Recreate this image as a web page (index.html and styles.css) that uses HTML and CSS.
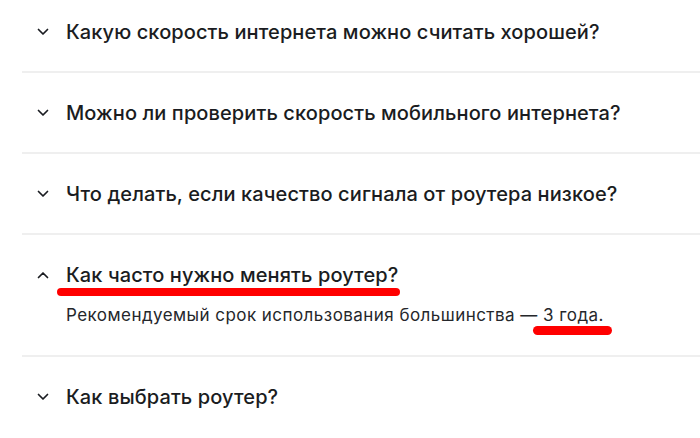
FILE: index.html
```html
<!DOCTYPE html>
<html lang="ru">
    <head>
        <meta charset="utf-8">
        <title>FAQ</title>
        <link rel="stylesheet" href="styles.css">
    </head>
    <body>
        <div class="faqList">
            <div class="faqItem">
                <div class="faqQuestion">
                    <svg class="chevron" viewBox="0 0 12 8" width="12" height="8"><path d="M1.5 1.5 L6 6 L10.5 1.5"/></svg>
                    <span>Какую скорость интернета можно считать хорошей?</span>
                </div>
            </div>
            <div class="faqItem">
                <div class="faqQuestion">
                    <svg class="chevron" viewBox="0 0 12 8" width="12" height="8"><path d="M1.5 1.5 L6 6 L10.5 1.5"/></svg>
                    <span>Можно ли проверить скорость мобильного интернета?</span>
                </div>
            </div>
            <div class="faqItem">
                <div class="faqQuestion">
                    <svg class="chevron" viewBox="0 0 12 8" width="12" height="8"><path d="M1.5 1.5 L6 6 L10.5 1.5"/></svg>
                    <span>Что делать, если качество сигнала от роутера низкое?</span>
                </div>
            </div>
            <div class="faqItem open">
                <div class="faqQuestion">
                    <svg class="chevron" viewBox="0 0 12 8" width="12" height="8"><path d="M1.5 6.5 L6 2 L10.5 6.5"/></svg>
                    <span class="marked markedQuestion">Как часто нужно менять роутер?</span>
                </div>
                <p class="faqAnswer">Рекомендуемый срок использования большинства — <span class="marked markedAnswer">3 года.</span></p>
            </div>
            <div class="faqItem">
                <div class="faqQuestion">
                    <svg class="chevron" viewBox="0 0 12 8" width="12" height="8"><path d="M1.5 1.5 L6 6 L10.5 1.5"/></svg>
                    <span>Как выбрать роутер?</span>
                </div>
            </div>
        </div>
    </body>
</html>
```
FILE: styles.css
```css
* {
    margin: 0;
    padding: 0;
    box-sizing: border-box;
}
body {
    background: #ffffff;
    font-family: 'Inter', 'Noto Sans', sans-serif;
    color: #1a1c21;
    overflow: hidden;
}
.faqList {
    margin-top: -8px;
    margin-left: 22px;
}
.faqItem {
    border-bottom: 2px solid #efefef;
    padding: 28px 0 27px 15px;
}
.faqItem:last-child {
    border-bottom: 0;
}
.faqItem.open {
    padding-bottom: 28px;
}
.faqQuestion {
    display: flex;
    align-items: center;
    gap: 17px;
    font-size: 20px;
    line-height: 24px;
    font-weight: 500;
    letter-spacing: 0.1px;
}
.chevron {
    flex-shrink: 0;
    fill: none;
    stroke: #1a1c21;
    stroke-width: 1.7;
    stroke-linecap: round;
    stroke-linejoin: round;
}
.faqAnswer {
    margin-top: 16px;
    margin-left: 29px;
    font-size: 17px;
    line-height: 24px;
    letter-spacing: 0.45px;
    color: #25272b;
}
.marked {
    position: relative;
}
.marked::after {
    content: "";
    position: absolute;
    background: #ff0000;
    border-radius: 5px;
}
.markedQuestion::after {
    left: -9px;
    right: -2px;
    bottom: -9px;
    height: 8px;
}
.markedAnswer::after {
    left: -10px;
    right: -8px;
    bottom: -10px;
    height: 9px;
}
```
